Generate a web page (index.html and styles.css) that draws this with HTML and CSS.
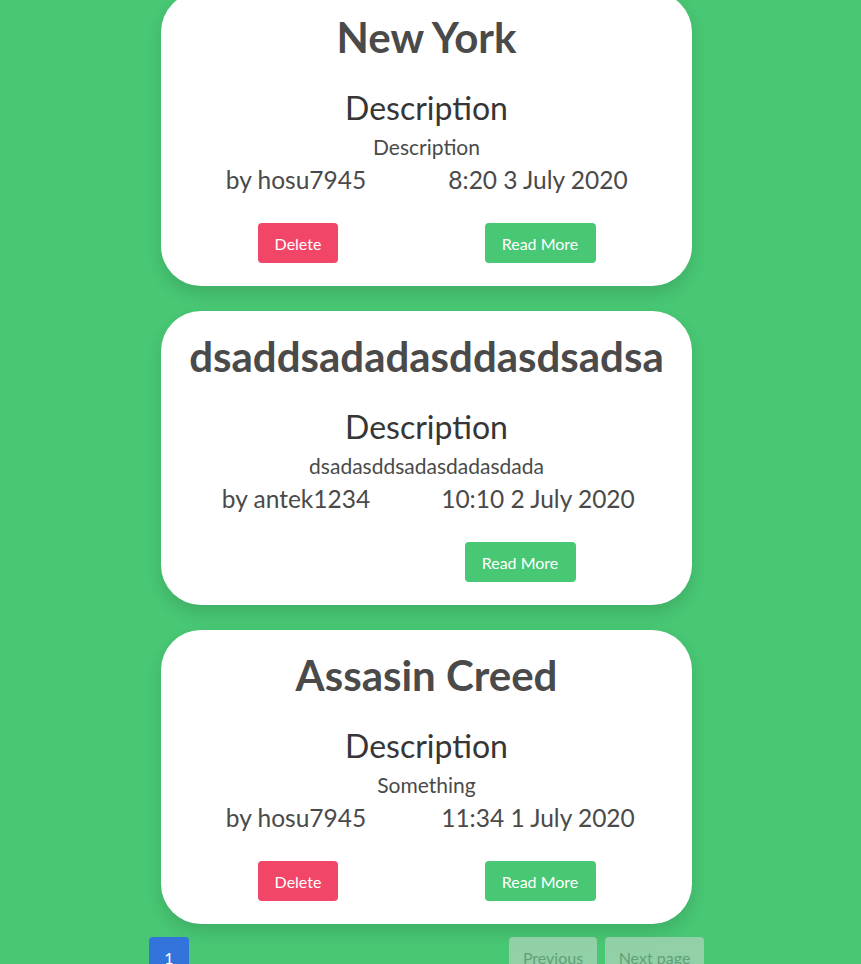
FILE: index.html
```html
<!DOCTYPE html>
<html>
<head>
<meta charset="utf-8">
<link rel="stylesheet" href="styles.css">
</head>
<body>
<main class="feed">
  <article class="card">
    <h1 class="card-title">New York</h1>
    <h2 class="card-sub">Description</h2>
    <p class="card-desc">Description</p>
    <div class="row meta">
      <span>by hosu7945</span>
      <span>8:20 3 July 2020</span>
    </div>
    <div class="row actions">
      <div class="cell"><button class="btn btn-danger">Delete</button></div>
      <div class="cell"><button class="btn btn-success">Read More</button></div>
    </div>
  </article>
  <article class="card">
    <h1 class="card-title">dsaddsadadasddasdsadsa</h1>
    <h2 class="card-sub">Description</h2>
    <p class="card-desc">dsadasddsadasdadasdada</p>
    <div class="row meta">
      <span>by antek1234</span>
      <span>10:10 2 July 2020</span>
    </div>
    <div class="row actions">
      <div class="cell"></div>
      <div class="cell cell-shift"><button class="btn btn-success">Read More</button></div>
    </div>
  </article>
  <article class="card">
    <h1 class="card-title">Assasin Creed</h1>
    <h2 class="card-sub">Description</h2>
    <p class="card-desc">Something</p>
    <div class="row meta">
      <span>by hosu7945</span>
      <span>11:34 1 July 2020</span>
    </div>
    <div class="row actions">
      <div class="cell"><button class="btn btn-danger">Delete</button></div>
      <div class="cell"><button class="btn btn-success">Read More</button></div>
    </div>
  </article>
  <nav class="pagination">
    <div class="pages"><span class="page current">1</span></div>
    <div class="nav-btns">
      <span class="page-nav disabled">Previous</span>
      <span class="page-nav disabled">Next page</span>
    </div>
  </nav>
</main>
</body>
</html>
```
FILE: styles.css
```css
html, body {
  margin: 0;
  padding: 0;
  background: #48c774;
  font-family: Lato, "Noto Sans", sans-serif;
  color: #4a4a4a;
}
.feed {
  display: flex;
  flex-direction: column;
  align-items: center;
  gap: 25px;
  margin-top: -8px;
  padding-right: 8px;
}
.card {
  width: 531px;
  box-sizing: border-box;
  height: 294px;
  background: #fff;
  border-radius: 40px;
  box-shadow: 0 8px 16px rgba(10, 10, 10, 0.12);
  padding: 22px 0 0;
  text-align: center;
}
.card-title {
  margin: 0;
  font-size: 42px;
  line-height: 46px;
  font-weight: 700;
  color: #4a4a4a;
  white-space: nowrap;
}
.card-sub {
  margin: 28px 0 0;
  font-size: 32px;
  line-height: 40px;
  font-weight: 400;
  color: #363636;
}
.card-desc {
  margin: 0;
  padding-top: 4px;
  font-size: 21px;
  line-height: 30px;
  color: #4a4a4a;
}
.row {
  display: grid;
  grid-template-columns: 1fr 1fr;
  margin: 0 0 0 14px;
  width: 484px;
}
.meta {
  font-size: 24.5px;
  line-height: 38px;
  margin-top: -1px;
}
.actions {
  margin-top: 24px;
  margin-left: 16px;
}
.cell {
  display: flex;
  justify-content: center;
}
.cell-shift {
  padding-right: 40px;
}
.btn {
  border: none;
  border-radius: 4px;
  height: 40px;
  padding: 0;
  font-family: inherit;
  font-size: 16px;
  color: #fff;
}
.btn-danger {
  background: #f14668;
  width: 80px;
}
.btn-success {
  background: #48c774;
  width: 111px;
}
.pagination {
  width: 555px;
  margin-top: -12px;
  display: flex;
  justify-content: space-between;
  font-size: 16px;
}
.page {
  display: inline-flex;
  align-items: center;
  justify-content: center;
  width: 40px;
  height: 40px;
  border-radius: 4px;
  background: #3273dc;
  color: #fff;
  box-sizing: border-box;
  padding-top: 1px;
}
.nav-btns {
  display: flex;
  gap: 8px;
}
.page-nav {
  display: inline-flex;
  align-items: center;
  justify-content: center;
  height: 40px;
  padding: 1px 0 0;
  box-sizing: border-box;
  border-radius: 4px;
  background: #dbdbdb;
  color: #7a7a7a;
  opacity: 0.5;
}
.page-nav:first-child { width: 88px; }
.page-nav:last-child { width: 99px; }
```
